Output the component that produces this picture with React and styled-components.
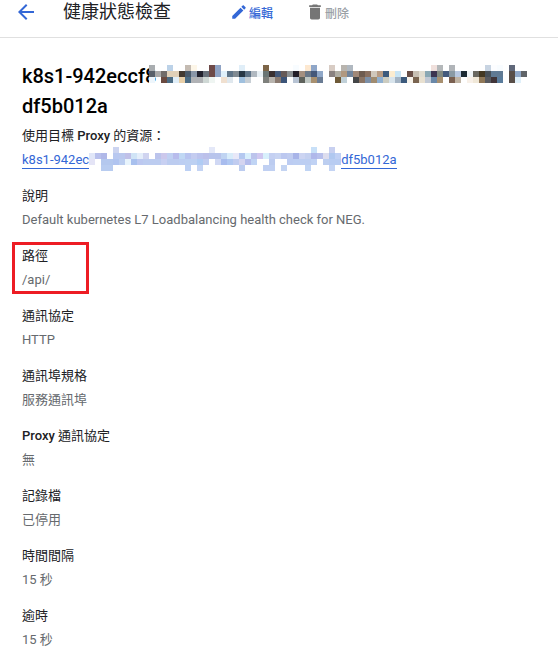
import styled, { createGlobalStyle } from 'styled-components'

const GlobalStyle = createGlobalStyle`
  html, body {
    margin: 0;
    background: #fff;
    overflow: hidden;
  }
  body {
    font-family: Roboto, "Noto Sans CJK TC", sans-serif;
    font-size: 13px;
    color: #202124;
  }
`

// pixelated parts of the resource names, '.' is an empty cell
const TITLE_BLUR = [
  'a9adb0 . . bcd2e8 . . c4bbb2 fdf6e8 . . 6e4a48 8fa3c4 . . . e0eef8 . . . 7d6547 . . . . f8fcff . fde8d0 8fa6c8 . . d8ccc4 . b8b4ae b0b8c0 . . . . . . . . . . . . . f0e0dc b4b8ba . b0b4b8 . . . . . c8d4e2 fcfdff f8fcff . 60687a . .',
  '58606a a9a9a9 706c6a e0d0b8 e0d0b8 443a30 4a5a6a 8a97a8 22222e 68707a 6e4a48 8fa3c4 e0f0fa 607588 808a92 283846 5f7488 b0b8c0 e8f0f5 6a7574 3a3030 445878 665a58 8a8f92 221e28 a49080 6a7888 44587a 90a8c8 . 8a8280 b0aea4 b09880 70849c a08878 6e5c50 8a7060 d0c8bc b89c84 3c5a7c fcecd0 c8e4f4 . 6a5048 c8c0b4 e0dcd0 8aa8b4 3c3450 808880 445a7c 8a9aa4 b8c8e0 1c2a32 f0f4f6 6a6860 443822 485058 607a94 607a94 . 584e48 90a8c8 606468',
  'eef6fc . 6a4a40 4c6c84 e0eef8 e8cfa8 4c6c84 b0b2b5 b0b2b5 cfd8d5 eff5f2 . f0e0d0 e0e8ee . a0c0de c8cfd5 . . 7e807c b8b4ae 8a7a70 3c5478 . b8c4d4 5e625c c0c8c4 a89070 6a7c94 . . 6e5a38 c0d0d8 . 444648 8a7464 7c90a8 a08c70 90b0d0 ccccc0 d8e4ec a4b4c4 3c5a7c f8f4ec 7a6450 e8e0d0 c0c8d4 6a88a8 a89070 . 7a6050 c0b4a4 . f8f0e8 f0e8d8 907858 585a60 403438 5a7c9c . 584e48 e0f0fa .',
]

const LINK_BLUR = [
  '. . . . ccd4f0 . . . . . . . . . . . . . . . e4e8f8 . . . . . . . . . . . . . . . . c8e0f8 . . c8d0f0 .',
  'e0e6f8 b8c0ec b0b8e8 . b8c8f0 bac8ee c0c0e8 d0e4f6 e4eefa d0d4f0 . bcc4ec ccc8ec c0d0f2 b8bcec c0d8f4 b8c4f0 c4ccf0 bcc4ee bcc0ea b8c4ec b8c4ec c0d4f2 d8ecfa e8e8f8 b4c8f0 d8eefc bcc4ec d0c8f0 d8f0fc c4d0f2 c8d4f2 bcc8f0 c0ccf0 a8b4e8 ccd4f2 c4d0f0 b0b8ea b8c0ec ddddee b0c8f0 c0d0f4',
  'e4e4f6 . b4c8ee b4c8ee b0c4f0 bccef0 e8f4fc a8c0ee bcc8f0 bcccf0 bcccf0 bcccf0 c8d0f2 bcccf0 bcccf0 bccef2 bcd0f2 bcd0f2 b0ccf4 c0ccf0 . d0d8f4 a8bcee b0c8f2 c0ccf0 d4d4f0 b4bcec c0d4f4 . . bcccf0 . . bcccf2 bccef2 bccef2 bccef2 c0d2f4 . bccef0 b8ccf2 b8ccf2',
  '. . b8ccf0 b8ccf0 . . . . . . . . . . . . bcd0f4 . c4d4f4 . . . . . . bcccf0 . . . c0d0f2 c0d0f2 . c4d4f2 . . . c0d4f4 . . . c4d4f4 .',
]

const FIELDS = [
  { label: '說明', value: 'Default kubernetes L7 Loadbalancing health check for NEG.' },
  { label: '路徑', value: '/api/', marked: true },
  { label: '通訊協定', value: 'HTTP' },
  { label: '通訊埠規格', value: '服務通訊埠' },
  { label: <><b>Proxy</b> 通訊協定</>, value: '無' },
  { label: '記錄檔', value: '已停用' },
  { label: '時間間隔', value: '15 秒' },
  { label: '逾時', value: '15 秒' },
]

function Blur({ rows, className }) {
  const cells = rows.map((r) => r.split(' '))
  const cols = cells[0].length
  return (
    <svg className={className} width={cols * 6} height={rows.length * 6} viewBox={`0 0 ${cols * 6} ${rows.length * 6}`} shapeRendering="crispEdges">
      {cells.map((row, y) =>
        row.map((c, x) => (c === '.' ? null : <rect key={`${x}-${y}`} x={x * 6} y={y * 6} width="6" height="6" fill={`#${c}`} />))
      )}
    </svg>
  )
}

function App() {
  return (
    <>
      <GlobalStyle />
      <Header>
        <BackIcon viewBox="0 0 24 24"><path d="M20 11H7.83l5.59-5.59L12 4l-8 8 8 8 1.41-1.41L7.83 13H20v-2z" /></BackIcon>
        <PageTitle>健康狀態檢查</PageTitle>
        <Action $color="#3367d6" $size={18} $gap={1}>
          <svg viewBox="0 0 24 24"><path d="M3 17.25V21h3.75L17.81 9.94l-3.75-3.75L3 17.25zM20.71 7.04c.39-.39.39-1.02 0-1.41l-2.34-2.34c-.39-.39-1.02-.39-1.41 0l-1.83 1.83 3.75 3.75 1.83-1.83z" /></svg>
          編輯
        </Action>
        <Action $color="#9aa0a6" $iconColor="#757575" $size={20} $gap={0}>
          <svg viewBox="0 0 24 24"><path d="M6 19c0 1.1.9 2 2 2h8c1.1 0 2-.9 2-2V7H6v12zM19 4h-3.5l-1-1h-5l-1 1H5v2h14V4z" /></svg>
          刪除
        </Action>
      </Header>
      <Content>
        <Name>
          k8s1-942eccf8<TitleBlur rows={TITLE_BLUR} /> df5b012a
        </Name>
        <UsedBy>使用目標 <b>Proxy</b> 的資源：</UsedBy>
        <ResourceLink href="#">
          <LinkText>k8s1-942ec</LinkText>
          <LinkBlur rows={LINK_BLUR} />
          <LinkText>df5b012a</LinkText>
        </ResourceLink>
        <Fields>
          {FIELDS.map((f, i) => (
            <Field key={i}>
              {f.marked && <Highlight />}
              <Label>{f.label}</Label>
              <Value>{f.value}</Value>
            </Field>
          ))}
        </Fields>
      </Content>
    </>
  )
}

const Header = styled.header`
  display: flex;
  align-items: center;
  height: 37px;
  border-bottom: 1px solid #e0e0e0;
  padding-left: 14px;
`

const BackIcon = styled.svg`
  width: 24px;
  height: 24px;
  fill: #3367d6;
  margin-top: -13px;
`

const PageTitle = styled.h1`
  margin: -13px 0 0 25px;
  width: 167px;
  font-size: 18px;
  font-weight: 400;
  line-height: 24px;
  color: #202124;
`

const Action = styled.div`
  display: flex;
  align-items: center;
  gap: ${(p) => p.$gap}px;
  width: 75px;
  margin-top: -13px;
  font-size: 12px;
  font-weight: 500;
  color: ${(p) => p.$color};

  svg {
    width: ${(p) => p.$size}px;
    height: ${(p) => p.$size}px;
    fill: ${(p) => p.$iconColor || p.$color};
  }
`

const Content = styled.main`
  padding: 23px 0 0 22px;
`

const Name = styled.h2`
  margin: 0;
  font-size: 20px;
  font-weight: 500;
  line-height: 30px;
  color: #000;
`

const TitleBlur = styled(Blur)`
  vertical-align: 0;
  margin-left: -7px;
`

const UsedBy = styled.div`
  margin-top: 5px;
  line-height: 20px;

  b {
    font-weight: 500;
  }
`

const ResourceLink = styled.a`
  display: flex;
  align-items: flex-start;
  margin-top: 5px;
  height: 18px;
  color: #3367d6;
  text-decoration: none;
`

const LinkText = styled.span`
  line-height: 17px;
  border-bottom: 1px solid #3367d6;
`

const LinkBlur = styled(Blur)`
  flex: none;
  margin-top: -4px;
`

const Fields = styled.div`
  margin-top: 17px;
`

const Field = styled.section`
  position: relative;
  height: 60px;
`

const Highlight = styled.div`
  position: absolute;
  left: -10px;
  top: -4px;
  width: 71px;
  height: 46px;
  border: 3px solid #ed1c24;
`

const Label = styled.div`
  line-height: 20px;
  color: #202124;

  b {
    font-weight: 500;
  }
`

const Value = styled.div`
  margin-top: 4px;
  line-height: 20px;
  color: #666a6e;
`

export default App
